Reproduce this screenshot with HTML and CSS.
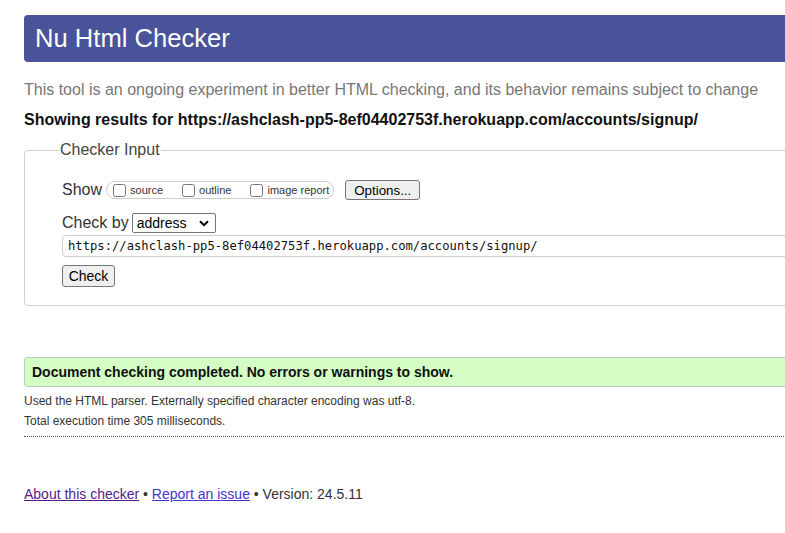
FILE: index.html
```html
<!DOCTYPE html>
<html lang="en">
<head>
<meta charset="utf-8">
<title>Nu Html Checker</title>
<link rel="stylesheet" href="styles.css">
</head>
<body>
<div class="page">
  <h1 class="title">Nu Html Checker</h1>
  <p class="desc">This tool is an ongoing experiment in better HTML checking, and its behavior remains subject to change</p>
  <p class="showing">Showing results for https://ashclash-pp5-8ef04402753f.herokuapp.com/accounts/signup/</p>

  <fieldset class="input-box">
    <legend class="legend">Checker Input</legend>
    <div class="row row-show">
      <span class="label">Show</span>
      <span class="opts">
        <label class="opt"><input type="checkbox" class="cb"><span>source</span></label>
        <label class="opt"><input type="checkbox" class="cb"><span>outline</span></label>
        <label class="opt"><input type="checkbox" class="cb"><span>image report</span></label>
      </span>
      <button class="btn btn-options" type="button">Options...</button>
    </div>
    <div class="row row-by">
      <span class="label">Check by</span>
      <span class="select-wrap">
        <select class="select"><option>address</option></select>
        <svg class="chev" width="10" height="7" viewBox="0 0 10 7"><path d="M1 1.2 L5 5.2 L9 1.2" fill="none" stroke="#000" stroke-width="2"/></svg>
      </span>
    </div>
    <div class="url">https://ashclash-pp5-8ef04402753f.herokuapp.com/accounts/signup/</div>
    <button class="btn btn-check" type="button">Check</button>
  </fieldset>

  <div class="success">Document checking completed. No errors or warnings to show.</div>
  <p class="meta">Used the HTML parser. Externally specified character encoding was utf-8.</p>
  <p class="meta meta-last">Total execution time 305 milliseconds.</p>

  <p class="footer"><a class="link visited" href="#">About this checker</a> • <a class="link" href="#">Report an issue</a> • Version: 24.5.11</p>
</div>
</body>
</html>
```
FILE: styles.css
```css
html, body {
  margin: 0;
  padding: 0;
  background: #fff;
  overflow: hidden;
}
body {
  font-family: "Liberation Sans", Arial, sans-serif;
  color: #222;
}
.page {
  width: 1000px;
  padding: 15px 0 0 24px;
}
.title {
  margin: 0;
  height: 47px;
  line-height: 46px;
  padding-left: 11px;
  background: #4a539a;
  color: #fff;
  font-weight: normal;
  font-size: 25.6px;
  border-radius: 4px;
}
.desc {
  margin: 19px 0 0;
  font-size: 16px;
  line-height: 18px;
  color: #777;
}
.showing {
  margin: 12px 0 0;
  font-size: 16px;
  line-height: 18px;
  font-weight: bold;
  color: #111;
}
.input-box {
  margin: 12px 0 0;
  padding: 21px 0 18px 37px;
  border: 1px solid #cfcfcf;
  border-radius: 4px;
  min-width: 0;
}
.legend {
  font-size: 16px;
  line-height: 18px;
  padding: 0 1px;
  margin-left: -3px;
  color: #444;
}
.row {
  display: flex;
  align-items: center;
  height: 20px;
}
.label {
  font-size: 16px;
  color: #333;
  line-height: 18px;
}
.opts {
  display: inline-flex;
  align-items: center;
  gap: 19px;
  height: 16px;
  margin-left: 4px;
  padding: 0 4px 0 6px;
  border: 1px solid #ccc;
  border-radius: 9px;
}
.opt {
  display: inline-flex;
  align-items: center;
  font-size: 11px;
  color: #333;
}
.cb {
  width: 13px;
  height: 13px;
  margin: 0 4px 0 0;
}
.btn {
  font-family: "Liberation Sans", Arial, sans-serif;
  font-size: 13.33px;
  color: #000;
  background: #efefef;
  border: 1px solid #767676;
  border-radius: 3px;
  padding: 0;
  height: 21px;
}
.btn-options {
  margin-left: 11px;
  width: 75px;
  height: 20px;
}
.row-by {
  margin-top: 13px;
}
.select-wrap {
  position: relative;
  display: inline-block;
  margin-left: 3px;
}
.select {
  appearance: none;
  -webkit-appearance: none;
  width: 84px;
  height: 20px;
  padding: 0 0 0 4px;
  border: 1px solid #767676;
  border-radius: 2px;
  background: #fff;
  font-family: "Liberation Sans", Arial, sans-serif;
  font-size: 14px;
  color: #000;
}
.chev {
  position: absolute;
  right: 7px;
  top: 7px;
  pointer-events: none;
}
.url {
  margin-top: 2px;
  height: 20px;
  width: 900px;
  padding-left: 5px;
  border: 1px solid #ccc;
  border-radius: 4px;
  font-family: "DejaVu Sans Mono", "Liberation Mono", monospace;
  font-size: 12.2px;
  line-height: 20px;
  color: #111;
}
.btn-check {
  display: block;
  margin-top: 8px;
  width: 53px;
  height: 22px;
  font-size: 14px;
}
.success {
  margin-top: 51px;
  height: 28px;
  line-height: 28px;
  padding-left: 7px;
  background: #d5fec4;
  border: 1px solid #bfcac4;
  border-radius: 3px;
  font-size: 14px;
  font-weight: bold;
  color: #111;
}
.meta {
  margin: 4px 0 0;
  font-size: 12px;
  line-height: 20px;
  color: #333;
}
.meta-last {
  margin-top: 0;
  padding-bottom: 5px;
  border-bottom: 1px dotted #555;
}
.footer {
  margin: 48px 0 0;
  font-size: 14px;
  line-height: 18px;
  color: #333;
}
.link {
  color: #4433cc;
  text-decoration: underline;
}
.link.visited {
  color: #551a8b;
}
```
